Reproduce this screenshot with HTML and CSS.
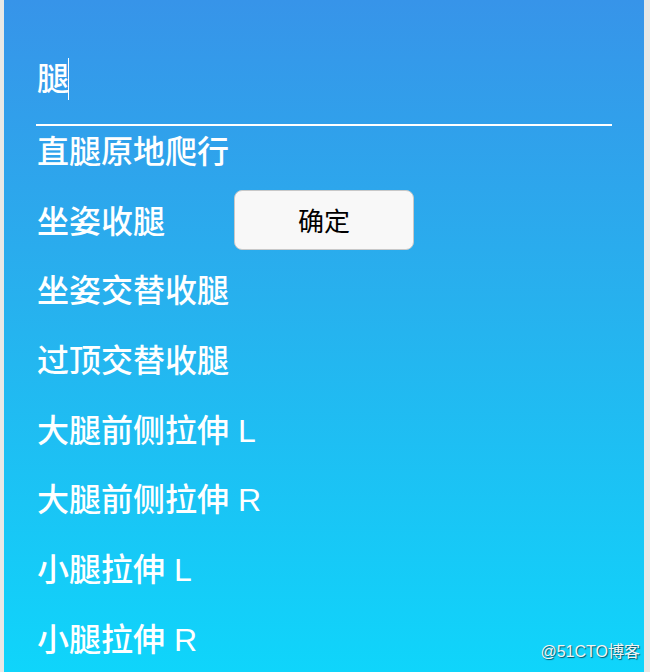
FILE: index.html
```html
<!DOCTYPE html>
<html lang="zh">
<head>
<meta charset="utf-8">
<link rel="stylesheet" href="styles.css">
</head>
<body>
<div class="panel">
  <div class="search">
    <span class="search-text">腿</span><span class="caret"></span>
  </div>
  <ul class="list">
    <li class="item">直腿原地爬行</li>
    <li class="item">坐姿收腿<button class="confirm">确定</button></li>
    <li class="item">坐姿交替收腿</li>
    <li class="item">过顶交替收腿</li>
    <li class="item">大腿前侧拉伸 L</li>
    <li class="item">大腿前侧拉伸 R</li>
    <li class="item">小腿拉伸 L</li>
    <li class="item">小腿拉伸 R</li>
  </ul>
  <div class="watermark">@51CTO博客</div>
</div>
</body>
</html>
```

FILE: styles.css
```css
html, body {
  margin: 0;
  padding: 0;
  background: #e8e8e6;
  height: 672px;
  overflow: hidden;
}
.panel {
  position: relative;
  margin-left: 4px;
  width: 640px;
  height: 672px;
  box-sizing: border-box;
  padding: 0 32px 0 33px;
  background: linear-gradient(to bottom, #3794e9 0%, #27b1ee 45%, #0fd5fb 100%);
  font-family: "Liberation Sans", "Noto Sans CJK SC", sans-serif;
  font-weight: 500;
  color: #ffffff;
}
.search {
  height: 126px;
  box-sizing: border-box;
  border-bottom: 2px solid #ffffff;
  display: flex;
  align-items: flex-start;
  padding-top: 58px;
  margin-left: -1px;
  padding-left: 1px;
}
.search-text {
  font-size: 32px;
  line-height: 42px;
  display: block;
}
.caret {
  display: block;
  width: 1px;
  height: 42px;
  margin-left: -1px;
  background: #ffffff;
}
.list {
  list-style: none;
  margin: 0;
  padding: 0;
  display: flex;
  flex-direction: column;
  gap: 17.7px;
}
.item {
  font-size: 32px;
  height: 52px;
  line-height: 52px;
  display: flex;
  align-items: center;
  white-space: nowrap;
}
.confirm {
  margin-left: 69px;
  margin-top: -4px;
  width: 180px;
  height: 60px;
  border: 1px solid #c8c8c8;
  border-radius: 8px;
  background: #f8f8f8;
  color: #000000;
  font-family: "Liberation Sans", "Noto Sans CJK SC", sans-serif;
  font-weight: 400;
  font-size: 26px;
  padding: 0;
}
.watermark {
  position: absolute;
  right: 4px;
  bottom: 10px;
  font-size: 16px;
  font-weight: 400;
  color: #f4f4f4;
  text-shadow: 1px 1px 1px rgba(0, 0, 0, 0.6);
}
```
